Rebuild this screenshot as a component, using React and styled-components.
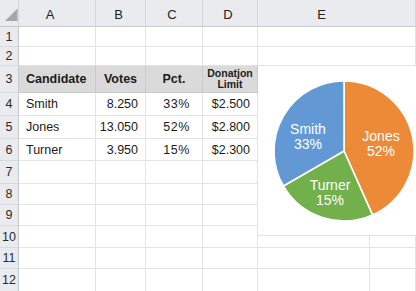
import React from "react";
import styled, { createGlobalStyle } from "styled-components";

const Global = createGlobalStyle`
  html, body { margin: 0; padding: 0; background: #fff; overflow: hidden; }
  * { box-sizing: border-box; }
`;

const Sheet = styled.div`
  position: relative;
  display: grid;
  grid-template-columns: 19px 77px 50px 57px 55px 112px 1fr;
  grid-template-rows: 27px 20px 19px 27px 23px 23px 22px 23px 21px 21px 22px 21px 23px;
  width: 416px;
  height: 291px;
  overflow: hidden;
  font-family: "Liberation Sans", Arial, sans-serif;
  color: #1c1c1c;
`;

const ColHead = styled.div`
  grid-column: span ${(p) => p.$span || 1};
  background: #e9ebee;
  border-right: 1px solid #d2d5d9;
  border-bottom: 1px solid #c6c9cd;
  display: flex;
  align-items: center;
  justify-content: center;
  padding: 2px ${(p) => p.$pr || 0}px 0 ${(p) => p.$pl || 0}px;
  font-size: 13px;
  color: #222;
  position: relative;
`;

const RowHead = styled.div`
  background: #e9ebee;
  border-right: 1px solid #c6c9cd;
  border-bottom: 1px solid #d6d9dd;
  display: flex;
  align-items: center;
  justify-content: center;
  font-size: 12.5px;
  color: #2a2a2a;
`;

const Cell = styled.div`
  grid-column: span ${(p) => p.$span || 1};
  border-right: 1px solid ${(p) => (p.$head ? "#c9c9c9" : "#e3e3e3")};
  border-bottom: 1px solid ${(p) => (p.$head ? "#c9c9c9" : "#e3e3e3")};
  background: ${(p) => (p.$head ? "#dadada" : "#fff")};
  font-weight: ${(p) => (p.$head ? 700 : 400)};
  display: flex;
  align-items: center;
  justify-content: ${(p) => p.$align || "flex-start"};
  padding: 0 ${(p) => p.$pr ?? 7}px 0 ${(p) => p.$pl ?? 7}px;
  font-size: 12.5px;
  letter-spacing: ${(p) => p.$ls || 0}px;
  white-space: nowrap;
`;

const TwoLine = styled.span`
  display: block;
  text-align: center;
  font-size: 10.5px;
  line-height: 11px;
  white-space: normal;
`;

const Corner = styled.svg`
  position: absolute;
  left: 0;
  top: 0;
`;

const Chart = styled.div`
  position: absolute;
  left: 258px;
  top: 66px;
  width: 158px;
  height: 170px;
  background: #fff;
  border-bottom: 1px solid #e0e0e0;
`;

const PieSvg = styled.svg`
  display: block;
  font-family: "Liberation Sans", Arial, sans-serif;
`;

const rowHeights = [20, 19, 27, 23, 23, 22, 23, 21, 21, 22, 21, 23];

const data = {
  4: ["Smith", "8.250", "33%", "$2.500"],
  5: ["Jones", "13.050", "52%", "$2.800"],
  6: ["Turner", "3.950", "15%", "$2.300"],
};

const cx = 86;
const cy = 85;
const r = 70;
const pt = (a) => {
  const rad = (a * Math.PI) / 180;
  return [cx + r * Math.sin(rad), cy - r * Math.cos(rad)];
};
const slice = (a0, a1) => {
  const [x0, y0] = pt(a0);
  const [x1, y1] = pt(a1);
  const large = a1 - a0 > 180 ? 1 : 0;
  return `M${cx} ${cy} L${x0.toFixed(2)} ${y0.toFixed(2)} A${r} ${r} 0 ${large} 1 ${x1.toFixed(2)} ${y1.toFixed(2)} Z`;
};

const slices = [
  { from: 0, to: 156, color: "#ec8a37" },
  { from: 156, to: 240, color: "#72b04c" },
  { from: 240, to: 360, color: "#6299d4" },
];

const labels = [
  { x: 50, y: 68, t: "Smith" },
  { x: 50, y: 83, t: "33%" },
  { x: 123, y: 75, t: "Jones" },
  { x: 123, y: 90, t: "52%" },
  { x: 72, y: 124, t: "Turner" },
  { x: 72, y: 139, t: "15%" },
];

function DataRow({ n }) {
  if (n === 3) {
    return (
      <>
        <Cell $head>Candidate</Cell>
        <Cell $head $align="center" $pl={0} $pr={0}>Votes</Cell>
        <Cell $head $align="center" $pl={0} $pr={0}>Pct.</Cell>
        <Cell $head $align="center" $pl={0} $pr={0}>
          <TwoLine>Donatjon<br />Limit</TwoLine>
        </Cell>
        <Cell $span={2} />
      </>
    );
  }
  const d = data[n];
  if (d) {
    return (
      <>
        <Cell>{d[0]}</Cell>
        <Cell $align="flex-end">{d[1]}</Cell>
        <Cell $align="flex-end" $pr={12} $ls={0.6}>{d[2]}</Cell>
        <Cell $align="flex-end">{d[3]}</Cell>
        <Cell />
        <Cell />
      </>
    );
  }
  const wideE = n <= 2;
  return (
    <>
      <Cell />
      <Cell />
      <Cell />
      <Cell />
      {wideE ? (
        <Cell $span={2} />
      ) : (
        <>
          <Cell />
          <Cell />
        </>
      )}
    </>
  );
}

export default function App() {
  return (
    <>
      <Global />
      <Sheet>
        <ColHead>
          <Corner width="19" height="26" viewBox="0 0 19 26">
            <polygon points="5,21 17.5,8.5 17.5,21" fill="#a3a7ac" />
          </Corner>
        </ColHead>
        <ColHead $pr={14}>A</ColHead>
        <ColHead $pr={4}>B</ColHead>
        <ColHead $pr={4}>C</ColHead>
        <ColHead $pr={4}>D</ColHead>
        <ColHead $span={2} $pr={30}>E</ColHead>
        {rowHeights.map((_, i) => (
          <React.Fragment key={i}>
            <RowHead>{i + 1}</RowHead>
            <DataRow n={i + 1} />
          </React.Fragment>
        ))}
        <Chart>
          <PieSvg width="158" height="169" viewBox="0 0 158 169">
            {slices.map((s) => (
              <path key={s.from} d={slice(s.from, s.to)} fill={s.color} stroke="#fff" strokeWidth="1.6" strokeLinejoin="round" />
            ))}
            {labels.map((l) => (
              <text key={l.t} x={l.x} y={l.y} fill="#fff" fontSize="14" textAnchor="middle">
                {l.t}
              </text>
            ))}
          </PieSvg>
        </Chart>
      </Sheet>
    </>
  );
}
